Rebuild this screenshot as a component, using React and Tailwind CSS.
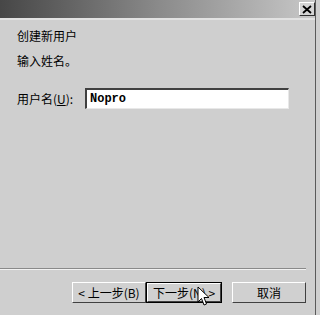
import React from 'react';

const cjk = { fontFamily: '"Noto Sans CJK SC", "Noto Sans", sans-serif' };

function RaisedButton({ children, isDefault, className = '' }) {
  // classic win9x 3D button
  return (
    <div className={`h-[21px] ${isDefault ? 'border border-black' : ''} ${className}`}>
      <div className="h-full w-full border-t border-l border-white border-r border-b border-r-[#404040] border-b-[#404040] bg-[#d0d0d0] flex items-center justify-center text-[12px] text-black leading-none">
        {children}
      </div>
    </div>
  );
}

function Cursor() {
  return (
    <svg className="absolute left-[197px] top-[286px]" width="14" height="22" viewBox="0 0 14 22">
      <path
        d="M1 1 L1 16 L4.5 12.5 L7 19 L9.5 18 L7 11.5 L12 11.5 Z"
        fill="white"
        stroke="black"
        strokeWidth="1"
        strokeLinejoin="miter"
      />
    </svg>
  );
}

export default function App() {
  return (
    <div className="relative w-[320px] h-[315px] overflow-hidden bg-[#cfcfcf] flex select-none" style={cjk}>
      <div className="w-[316px] h-full flex flex-col border-r border-[#5a5a5a]">
        {/* title bar */}
        <div className="h-[18px] shrink-0 flex items-center justify-end bg-gradient-to-r from-[#474747] via-[#8a8a8a] to-[#c8c8c8]">
          <div className="w-[16px] h-[14px] bg-[#d4d4d4] border-t border-l border-white border-r border-b border-r-[#303030] border-b-[#303030] flex items-center justify-center">
            <svg width="10" height="9" viewBox="0 0 10 9">
              <path d="M1 1 L9 8 M9 1 L1 8" stroke="black" strokeWidth="1.8" />
            </svg>
          </div>
        </div>
        <div className="h-[2px] shrink-0 bg-[#e2e2e2]" />

        {/* body */}
        <div className="flex-1 flex flex-col px-[17px] text-[12px] text-black leading-none">
          <div className="mt-[10px]">创建新用户</div>
          <div className="mt-[13px]">输入姓名。</div>

          <div className="mt-[21px] flex items-center">
            <span className="w-[68px]">
              用户名(<span className="underline">U</span>):
            </span>
            <div className="w-[204px] h-[21px] bg-white border-t-2 border-l-2 border-t-[#404040] border-l-[#404040] border-r border-b border-r-[#e8e8e8] border-b-[#e8e8e8] flex items-center pl-[3px]">
              <span className="text-[12px] font-semibold leading-none" style={{ fontFamily: '"Liberation Mono", monospace' }}>
                Nopro
              </span>
            </div>
          </div>

          <div className="flex-1" />
        </div>

        {/* separator */}
        <div className="w-[306px] shrink-0">
          <div className="h-px bg-[#8a8a8a]" />
          <div className="h-px bg-[#f2f2f2]" />
        </div>

        {/* buttons */}
        <div className="h-[45px] shrink-0 flex items-start pt-[12px] pl-[72px]">
          <RaisedButton className="w-[74px]">&lt; 上一步(B)</RaisedButton>
          <RaisedButton isDefault className="w-[76px]">下一步(N) &gt;</RaisedButton>
          <RaisedButton className="w-[74px] ml-[10px]">取消</RaisedButton>
        </div>
      </div>
      <Cursor />
    </div>
  );
}
